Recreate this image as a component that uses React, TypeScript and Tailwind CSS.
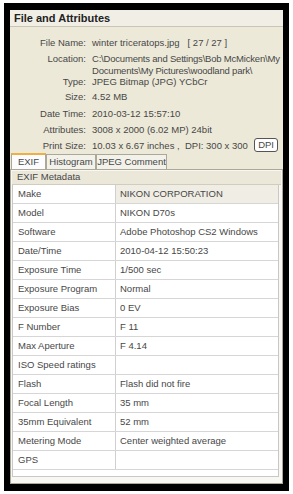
import React from "react";

const info: { label: string; value: React.ReactNode; cls: string }[] = [
  { label: "File Name:", value: <>winter triceratops.jpg&nbsp;&nbsp; [ 27 / 27 ]</>, cls: "h-[16px]" },
  {
    label: "Location:",
    value: (
      <span className="tracking-[-0.2px]">
        C:\Documents and Settings\Bob McMicken\My
        <br />
        Documents\My Pictures\woodland park\
      </span>
    ),
    cls: "h-[23px]",
  },
  { label: "Type:", value: "JPEG Bitmap (JPG)  YCbCr", cls: "h-[15px]" },
  { label: "Size:", value: "4.52 MB", cls: "h-[17px]" },
  { label: "Date Time:", value: "2010-03-12 15:57:10", cls: "h-[16px]" },
  { label: "Attributes:", value: "3008 x 2000 (6.02 MP)  24bit", cls: "h-[16px]" },
];

const exif: [string, string][] = [
  ["Make", "NIKON CORPORATION"],
  ["Model", "NIKON D70s"],
  ["Software", "Adobe Photoshop CS2 Windows"],
  ["Date/Time", "2010-04-12 15:50:23"],
  ["Exposure Time", "1/500 sec"],
  ["Exposure Program", "Normal"],
  ["Exposure Bias", "0 EV"],
  ["F Number", "F 11"],
  ["Max Aperture", "F 4.14"],
  ["ISO Speed ratings", ""],
  ["Flash", "Flash did not fire"],
  ["Focal Length", "35 mm"],
  ["35mm Equivalent", "52 mm"],
  ["Metering Mode", "Center weighted average"],
  ["GPS", ""],
];

export default function App() {
  return (
    <div
      className="w-[293px] h-[494px] bg-white pt-[3px] pl-[4px] text-[9.5px] text-[#474747] whitespace-nowrap"
      style={{ fontFamily: '"Liberation Sans", Arial, sans-serif' }}
    >
      <div className="w-[285px] h-[488px] bg-black pt-[7px] pl-[6px]">
        <div className="w-[273px] h-[474px] bg-[#ece9d8] flex flex-col overflow-hidden">
          {/* header */}
          <div className="h-[17px] bg-[#f1efe5] border-b border-[#c9c6b6] pl-[4px] flex items-center font-bold text-[11px] text-[#222]">
            File and Attributes
          </div>

          <div className="pt-[10px] flex flex-col leading-[11.5px]">
            {info.map((r) => (
              <div key={r.label} className={"flex " + r.cls}>
                <div className="w-[82px] text-right pr-[6px] shrink-0">{r.label}</div>
                <div>{r.value}</div>
              </div>
            ))}
            <div className="flex h-[13px] items-start">
              <div className="w-[82px] text-right pr-[6px] shrink-0">Print Size:</div>
              <div>10.03 x 6.67 inches ,&nbsp;&nbsp;DPI: 300 x 300</div>
              <div className="ml-auto mr-[5px] -mt-[2px] h-[14px] px-[3px] border border-[#555] rounded-[3px] bg-white leading-[12px]">
                DPI
              </div>
            </div>
          </div>

          {/* tabs */}
          <div className="flex items-end h-[16px] pl-[1px]">
            <div className="h-[16px] w-[35px] bg-[#fcfcfe] border-t-2 border-t-[#f0b040] border-x border-[#aca899] flex items-center justify-center">
              EXIF
            </div>
            <div className="h-[15px] w-[50px] bg-[#f2f1ea] border-t border-x border-[#aca899] flex items-center justify-center">
              Histogram
            </div>
            <div className="h-[15px] w-[71px] bg-[#f2f1ea] border-t border-x border-[#aca899] flex items-center justify-center">
              JPEG Comment
            </div>
          </div>

          {/* tab page */}
          <div className="flex-1 border border-[#aca899] bg-[#f8f7f2] px-[1px] pt-[1px] pb-[6px] flex flex-col">
            <div className="h-[14px] bg-[#ebe8da] border-b border-[#d0cdc0] pl-[5px] flex items-center">
              EXIF Metadata
            </div>
            <div className="flex-1 border-x border-b border-[#c8c8c8] bg-white mr-[2px]">
              {exif.map(([k, v], i) => (
                <div key={k} className="flex h-[19px] border-b border-[#d6d6d6]">
                  <div className="w-[103px] shrink-0 border-r border-[#d0d0d0] pl-[5px] flex items-center">{k}</div>
                  <div className={"flex-1 pl-[4px] flex items-center " + (i === 0 ? "bg-[#efede4]" : "")}>{v}</div>
                </div>
              ))}
            </div>
          </div>
        </div>
      </div>
    </div>
  );
}
